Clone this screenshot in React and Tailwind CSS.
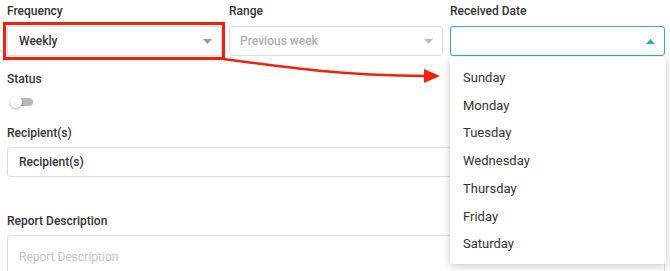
import React from "react";

const Caret = ({ up, color = "#9a9a9a" }) => (
  <svg width="9" height="5" viewBox="0 0 9 5" className="shrink-0">
    {up ? <path d="M0 5 L4.5 0 L9 5 Z" fill={color} /> : <path d="M0 0 L9 0 L4.5 5 Z" fill={color} />}
  </svg>
);

const Label = ({ children }) => (
  <div className="text-[12px] leading-4 font-medium text-[#333]">{children}</div>
);

export default function App() {
  const days = ["Sunday", "Monday", "Tuesday", "Wednesday", "Thursday", "Friday", "Saturday"];
  return (
    <div className="relative w-[670px] h-[271px] overflow-hidden bg-white" style={{ fontFamily: "Roboto, 'Liberation Sans', sans-serif" }}>
      <div className="pl-[7px] pr-[5px] pt-[3px]">
        <div className="grid grid-cols-[215px_214px_215px] gap-x-[7px]">
          <div>
            <Label>Frequency</Label>
            <div className="relative mt-[7px]">
              <div className="absolute -left-[4px] -top-[4px] -right-[3px] -bottom-[4px] border-[3px] border-[#f4200c]" />
              <div className="h-[30px] border border-[#dcdcdc] rounded-[3px] flex items-center justify-between pl-[11px] pr-[9px]">
                <span className="text-[12px] font-medium text-[#333]">Weekly</span>
                <Caret />
              </div>
            </div>
          </div>
          <div>
            <Label>Range</Label>
            <div className="mt-[7px] h-[30px] border border-[#dcdcdc] rounded-[3px] flex items-center justify-between pl-[10px] pr-[9px]">
              <span className="text-[12px] font-medium text-[#b0b0b0]">Previous week</span>
              <Caret color="#bdbdbd" />
            </div>
          </div>
          <div className="relative">
            <Label>Received Date</Label>
            <div className="mt-[7px] h-[30px] border border-[#31a9d8] rounded-[3px] flex items-center justify-end pr-[9px]">
              <Caret up color="#2fa6d6" />
            </div>
          </div>
        </div>

        <div className="mt-[15px]">
          <Label>Status</Label>
          <div className="relative mt-[9px] ml-[3px] h-[12px] w-[24px]">
            <div className="absolute left-[8px] top-[2px] h-[8px] w-[15px] rounded-full bg-[#b8b8b8]" />
            <div className="absolute left-0 top-0 h-[12px] w-[12px] rounded-full bg-white shadow-[0_1px_2px_rgba(0,0,0,0.35)]" />
          </div>
        </div>

        <div className="mt-[17px]">
          <Label>Recipient(s)</Label>
          <div className="mt-[6px] h-[30px] border border-[#dcdcdc] rounded-[3px] flex items-center pl-[11px]">
            <span className="text-[12px] font-medium text-[#333]">Recipient(s)</span>
          </div>
        </div>

        <div className="mt-[36px]">
          <Label>Report Description</Label>
          <div className="mt-[6px] h-[40px] border border-[#dcdcdc] rounded-[3px] flex items-start pt-[12px] pl-[11px]">
            <span className="text-[12px] text-[#c4c4c4]">Report Description</span>
          </div>
        </div>
      </div>

      <div className="absolute left-[450px] top-[57px] w-[216px] h-[207px] bg-white rounded-[3px] shadow-[0_2px_8px_rgba(0,0,0,0.22)] pt-[7px]">
        {days.map((d) => (
          <div key={d} className="h-[27.7px] flex items-center pl-[13px] text-[13px] text-[#333]">
            {d}
          </div>
        ))}
      </div>

      <svg className="absolute left-0 top-0 pointer-events-none" width="670" height="271">
        <path d="M224 59 C 290 68, 340 75, 426 76" stroke="#f4200c" strokeWidth="2.5" fill="none" />
        <path d="M424 69 L440 76 L424 83 Z" fill="#f4200c" />
      </svg>
    </div>
  );
}
